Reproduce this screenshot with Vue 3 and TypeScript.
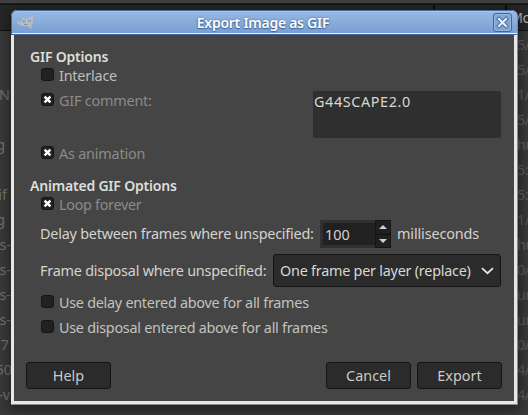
<script setup lang="ts">
import { ref } from 'vue'

interface Fragment { text: string; end: number }

const leftRows: Fragment[] = [
  { text: '', end: 10 }, { text: '', end: 10 }, { text: 'N', end: 10 }, { text: '', end: 10 },
  { text: 'g', end: 5 }, { text: '', end: 10 }, { text: 'if', end: 7 }, { text: 'g', end: 5 },
  { text: 's-', end: 11 }, { text: 's-', end: 11 }, { text: 's-', end: 11 }, { text: 's-', end: 11 },
  { text: '7', end: 9 }, { text: '50', end: 12 }, { text: '-v', end: 10 }
]
const rightRows: string[] = ['5/', '5/', '1/', '5/', 'hu', '5:', '5:', '1/', 'hu', '0/', 'un', 'un', '0/', '4/', '4/']

const interlace = ref(false)
const useComment = ref(true)
const animation = ref(true)
const loop = ref(true)
const useDelay = ref(false)
const useDisposal = ref(false)
</script>

<template>
  <div class="desktop">
    <div class="toolbar"></div>
    <div class="header"><i></i><i></i><span>Mo</span></div>
    <div class="list">
      <div class="left"><p v-for="(row, i) in leftRows" :key="i" :style="{ width: row.end + 'px' }"><span>{{ row.text }}</span></p></div>
      <div class="right"><p v-for="(t, i) in rightRows" :key="i">{{ t }}</p></div>
    </div>

    <div class="dialog">
      <div class="titlebar">
        <svg class="logo" width="17" height="16" viewBox="0 0 17 16">
          <path d="M0 6L3 7L5 6L5 2L8 4L12 3L16 0V7L14 11L15 14L13 13L10 11L5 11L1 9Z" fill="#b9bdc1" />
          <path d="M6 5.5h3v2H6zM11 5h3v2h-3zM7 9h4v1H7z" fill="#7895ba" />
          <path d="M7.5 6h1v1h-1zM12 5.5h1v1h-1z" fill="#d7d5cf" />
        </svg>
        <span class="title">Export Image as GIF</span>
        <button class="close" aria-label="Close">
          <svg width="13" height="13" viewBox="0 0 13 13">
            <path d="M3 3L10 10M10 3L3 10" stroke="#446b9c" stroke-width="4" stroke-linecap="square" />
            <path d="M3 3L10 10M10 3L3 10" stroke="#e8eef7" stroke-width="2.2" stroke-linecap="square" />
          </svg>
        </button>
      </div>

      <div class="body">
        <h2>GIF Options</h2>
        <div class="row interlace" @click="interlace = !interlace">
          <span class="box"><svg v-if="interlace" viewBox="0 0 13 13"><path d="M3.6 3.6l5.8 5.8m0-5.8l-5.8 5.8" /></svg></span>
          <span>Interlace</span>
        </div>
        <div class="comment">
          <div class="row dim" @click="useComment = !useComment">
            <span class="box"><svg v-if="useComment" viewBox="0 0 13 13"><path d="M3.6 3.6l5.8 5.8m0-5.8l-5.8 5.8" /></svg></span>
            <span>GIF comment:</span>
          </div>
          <div class="textarea"><span>G44SCAPE2.0</span></div>
        </div>
        <div class="row dim anim" @click="animation = !animation">
          <span class="box"><svg v-if="animation" viewBox="0 0 13 13"><path d="M3.6 3.6l5.8 5.8m0-5.8l-5.8 5.8" /></svg></span>
          <span>As animation</span>
        </div>

        <h2 class="second">Animated GIF Options</h2>
        <div class="row dim loop" @click="loop = !loop">
          <span class="box"><svg v-if="loop" viewBox="0 0 13 13"><path d="M3.6 3.6l5.8 5.8m0-5.8l-5.8 5.8" /></svg></span>
          <span>Loop forever</span>
        </div>
        <div class="delay">
          <span class="delay-label">Delay between frames where unspecified:</span>
          <div class="spin">
            <div class="value">100</div>
            <div class="steps">
              <span><svg width="8" height="4" viewBox="0 0 8 4"><path d="M0 4L4 0L8 4Z" /></svg></span>
              <span><svg width="8" height="4" viewBox="0 0 8 4"><path d="M0 0L4 4L8 0Z" /></svg></span>
            </div>
          </div>
          <span class="unit">milliseconds</span>
        </div>
        <div class="disposal">
          <span class="disposal-label">Frame disposal where unspecified:</span>
          <div class="combo">
            <span>One frame per layer (replace)</span>
            <svg width="13" height="8" viewBox="0 0 13 8"><path d="M1 1.2L6.5 6.2L12 1.2" fill="none" stroke="#e4e4e4" stroke-width="1.8" /></svg>
          </div>
        </div>
        <div class="row soft use-delay" @click="useDelay = !useDelay">
          <span class="box"><svg v-if="useDelay" viewBox="0 0 13 13"><path d="M3.6 3.6l5.8 5.8m0-5.8l-5.8 5.8" /></svg></span>
          <span>Use delay entered above for all frames</span>
        </div>
        <div class="row soft use-disposal" @click="useDisposal = !useDisposal">
          <span class="box"><svg v-if="useDisposal" viewBox="0 0 13 13"><path d="M3.6 3.6l5.8 5.8m0-5.8l-5.8 5.8" /></svg></span>
          <span>Use disposal entered above for all frames</span>
        </div>
        <div class="actions">
          <button class="help">Help</button>
          <button>Cancel</button>
          <button>Export</button>
        </div>
      </div>
    </div>
  </div>
</template>

<style>
body { background: #393939; overflow: hidden; }
</style>

<style scoped>
* { box-sizing: border-box; margin: 0; }
.desktop {
  position: relative; width: 528px; height: 415px; overflow: hidden;
  background: #393939; color: #d3d3cf;
  font: 14.4px/20px "Noto Sans", "Open Sans", sans-serif;
  white-space: nowrap;
}
.toolbar { height: 5px; background: #404040; border-bottom: 1px solid #111; box-shadow: inset 0 -1px #202020; }
.header { height: 26px; display: flex; justify-content: flex-end; background: #262626; border-bottom: 1px solid #121212; color: #b0b0b0; }
.header i { width: 72px; border-left: 2px solid #111; }
.header i:nth-child(2) { width: 5px; }
.header span { width: 18px; padding-top: 3px; letter-spacing: -0.5px; }
.list { display: flex; justify-content: space-between; padding-top: 1px; color: #727272; }
.list p { height: 25px; line-height: 25px; }
.left { width: 12px; }
.left p { display: flex; justify-content: flex-end; }
.right { width: 11px; color: #5c5c5c; letter-spacing: -0.4px; }

.dialog {
  position: absolute; left: 11px; top: 10px; width: 507px; height: 395px;
  display: flex; flex-direction: column; background: #e9e7e5;
  border-radius: 6px 6px 0 0; overflow: hidden;
  border-right: 1px solid #888; border-bottom: 1px solid #8b8b8b;
}
.desktop::after {
  content: ""; position: absolute; left: 11px; top: 10px; width: 507px; height: 395px;
  border-radius: 6px 6px 0 0; box-shadow: 0 3px 12px 2px rgba(0, 0, 0, .42); pointer-events: none;
}
.titlebar {
  height: 25px; flex: none; display: flex; align-items: center; margin-right: -1px;
  background: linear-gradient(#98b9e5, #789dcf);
  border: 1px solid #3f6699; border-top-color: #466f9f; border-radius: 6px 6px 0 0;
  box-shadow: inset 0 1px #a8c5eb, inset 0 -1px #e4edf8;
  padding: 0 5px 0 5px;
}
.logo { flex: none; }
.title {
  flex: 1; text-align: center; padding: 1px 1px 0 0; font-weight: 600; font-size: 14px; letter-spacing: -0.27px;
  color: #fff; text-shadow: 0 0 2px #315b91, 0 1px 1px #41699c;
}
.close {
  width: 19px; height: 19px; padding: 0; display: grid; place-items: center;
  border: 1px solid #416994; border-radius: 3px; background: #80a4d3; box-shadow: inset 0 0 0 1px #97b6df;
}
.body { width: 500px; height: 366px; margin-left: 3px; background: #454545; padding: 12px 12px 0; display: flex; flex-direction: column; }
h2 { font: 600 14px/20px "Noto Sans", sans-serif; letter-spacing: -0.2px; height: 20px; padding-left: 4px; color: #dededa; }
.row { display: flex; align-items: flex-start; gap: 5px; padding-left: 15px; height: 20px; letter-spacing: -0.2px; }
.row > span:last-child { margin-top: -2px; }
.box { width: 13px; height: 13px; flex: none; border: 1px solid #151515; border-radius: 3px; background: #212121; }
.box svg { display: block; width: 13px; height: 13px; margin: -1px; }
.box path { stroke: #fff; stroke-width: 2.4; fill: none; }
.interlace { margin-top: 1px; color: #bebebb; }
.dim { color: #8b8b89; }
.soft { color: #c2c2bf; letter-spacing: -0.27px; }
.comment { display: flex; justify-content: space-between; margin-top: 3px; height: 47px; padding-right: 1px; }
.comment .row { padding-top: 2px; }
.textarea { width: 188px; height: 47px; border-radius: 2px; background: #2f2f2f; padding: 1px 1px; color: #d7d7d1; letter-spacing: 0.6px; }
.anim { margin-top: 8px; }
.second { margin-top: 10px; }
.loop { margin-top: 1px; letter-spacing: -0.3px; }
.delay { display: flex; align-items: center; height: 28px; margin-top: 3px; padding-left: 14px; }
.delay-label { width: 280px; flex: none; letter-spacing: -0.22px; }
.unit { letter-spacing: -0.13px; }
.spin { width: 71px; height: 28px; display: flex; margin-right: 6px; }
.value { width: 55px; border: 3px solid #303030; border-right: 0; background: #212121; padding-left: 2px; line-height: 23px; }
.steps { width: 16px; background: #202020; border: 1px solid #151515; display: flex; flex-direction: column; }
.steps span { flex: 1; display: grid; place-items: center; }
.steps span + span { border-top: 1px solid #111; }
.steps path { fill: #d0d0d0; }
.disposal { display: flex; align-items: center; height: 33px; margin-top: 6px; padding-left: 14px; }
.disposal-label { width: 233px; flex: none; letter-spacing: -0.22px; }
.combo { width: 228px; flex: none; height: 33px; display: flex; align-items: center; justify-content: space-between; padding: 0 6px; background: #2b2b2b; border: 1px solid #151515; border-radius: 3px; color: #d8d8d4; letter-spacing: -0.24px; }
.use-delay { margin-top: 8px; }
.use-disposal { margin-top: 5px; }
.actions { display: flex; gap: 6px; margin-top: 22px; }
.actions button { width: 85px; height: 27px; padding: 0; border: 1px solid #151515; border-radius: 3px; background: #2b2b2b; font: inherit; line-height: 24px; color: #cacac7; }
.actions .help { margin-right: auto; }
</style>
